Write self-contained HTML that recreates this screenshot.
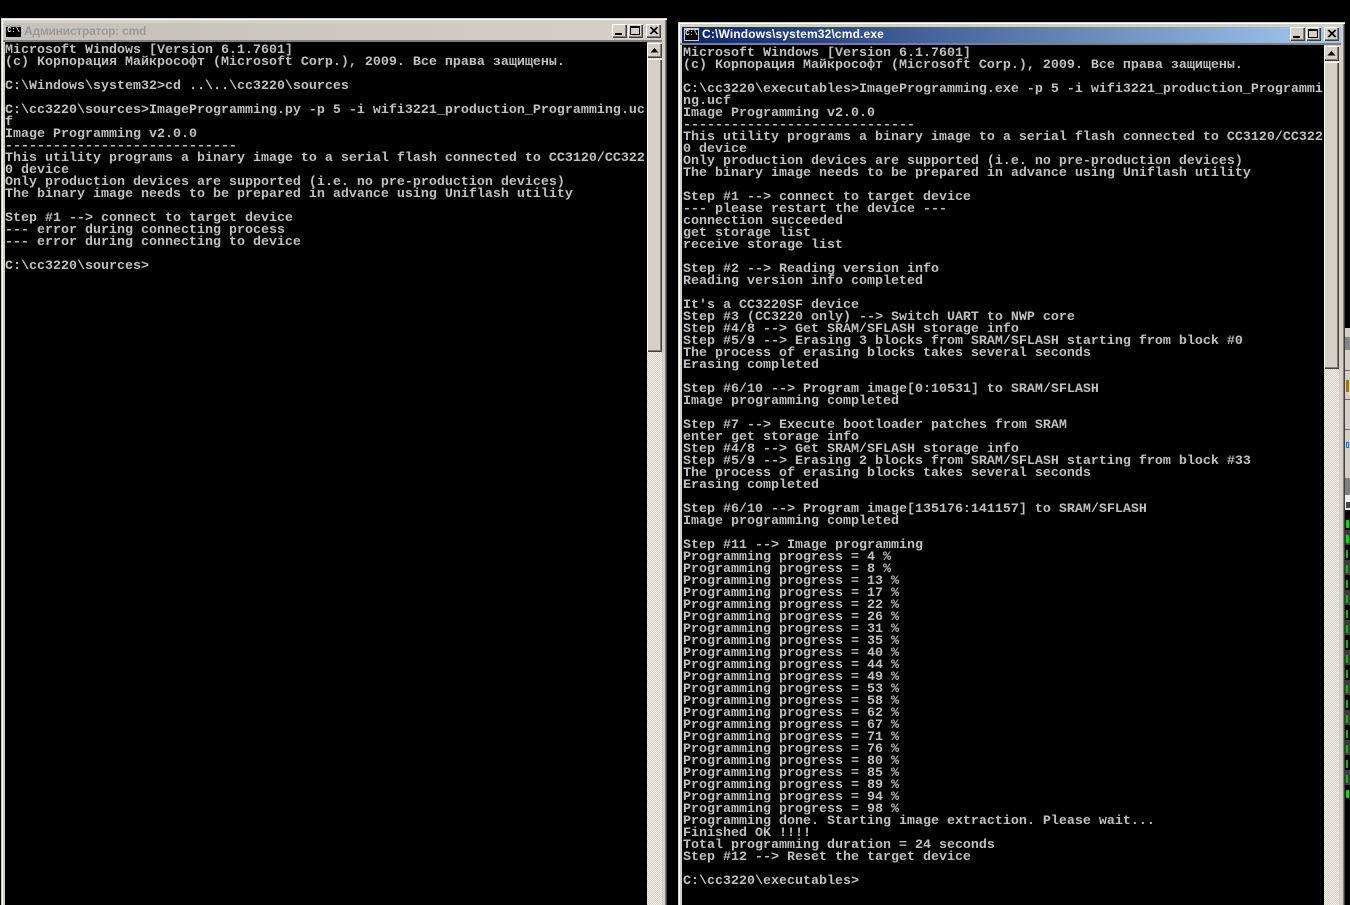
<!DOCTYPE html>
<html><head><meta charset="utf-8">
<style>
html,body{margin:0;padding:0;background:#000;width:1350px;height:905px;overflow:hidden}
div,pre,svg{position:absolute}
pre{margin:0;font-family:"Liberation Mono","DejaVu Sans Mono",monospace;font-size:13.33px;line-height:12px;color:#c0c0c0;font-weight:bold;letter-spacing:0;-webkit-font-smoothing:none}
.win{background:#d4d0c8;box-shadow:inset 1px 1px 0 #d4d0c8,inset 2px 2px 0 #fff,inset -1px 0 0 #404040,inset -2px 0 0 #808080}
.client{background:#000}
.title{font-family:"Liberation Sans",sans-serif;font-weight:bold;font-size:12px;line-height:16px;white-space:nowrap}
.btn{background:#d4d0c8;box-shadow:inset 1px 1px 0 #fff,inset -1px -1px 0 #404040,inset -2px -2px 0 #808080}
.track{background-color:#f2f0ea;background-image:linear-gradient(45deg,#d4d0c8 25%,transparent 25%,transparent 75%,#d4d0c8 75%),linear-gradient(45deg,#d4d0c8 25%,transparent 25%,transparent 75%,#d4d0c8 75%);background-size:2px 2px;background-position:0 0,1px 1px}
</style></head><body>

<!-- LEFT WINDOW -->
<div class="win" style="left:1px;top:18px;width:666px;height:887px"></div>
<div style="left:4px;top:23px;width:660px;height:17px;background:linear-gradient(90deg,#c4c1b9,#d4d0c8)"></div>
<div style="left:6px;top:25px;width:15px;height:12px;background:#000;border-top:2px solid #a8a8a8;box-sizing:border-box;color:#fff;font:bold 7px/9px 'Liberation Mono',monospace;text-align:center;overflow:hidden">C:\</div>
<div class="title" style="left:24px;top:23px;color:#9a9a9a;letter-spacing:-.22px">Администратор: cmd</div>
<div class="btn" style="left:612px;top:24px;width:15px;height:14px"></div>
<div style="left:615px;top:33px;width:7px;height:2px;background:#000"></div>
<div class="btn" style="left:628px;top:24px;width:15px;height:14px"></div>
<div style="left:630px;top:26px;width:10px;height:9px;border:1px solid #000;border-top-width:2px;box-sizing:border-box"></div>
<div class="btn" style="left:646px;top:24px;width:15px;height:14px"></div>
<svg style="left:646px;top:24px" width="15" height="14"><path d="M4 3L11 10M5 3L12 10M11 3L4 10M12 3L5 10" stroke="#000" stroke-width="1"/></svg>
<div style="left:3px;top:40px;width:659px;height:2px;background:#808080"></div>
<div class="client" style="left:5px;top:42px;width:642px;height:863px"></div>
<div class="track" style="left:647px;top:43px;width:15px;height:862px"></div>
<div class="btn" style="left:647px;top:43px;width:15px;height:15px"></div>
<svg style="left:647px;top:43px" width="15" height="15"><path d="M7.5 5L11.5 9.500H3.500Z" fill="#000"/></svg>
<div class="btn" style="left:647px;top:59px;width:15px;height:293px"></div>
<pre style="left:5px;top:45px">Microsoft Windows [Version 6.1.7601]
(c) Корпорация Майкрософт (Microsoft Corp.), 2009. Все права защищены.

C:\Windows\system32&gt;cd ..\..\cc3220\sources

C:\cc3220\sources&gt;ImageProgramming.py -p 5 -i wifi3221_production_Programming.uc
f
Image Programming v2.0.0
-----------------------------
This utility programs a binary image to a serial flash connected to CC3120/CC322
0 device
Only production devices are supported (i.e. no pre-production devices)
The binary image needs to be prepared in advance using Uniflash utility

Step #1 --&gt; connect to target device
--- error during connecting process
--- error during connecting to device

C:\cc3220\sources&gt;</pre>

<!-- RIGHT EDGE STRIP -->
<div style="left:1345px;top:328px;width:5px;height:182px;background:#d4d0c8"></div>
<div style="left:1345px;top:337px;width:5px;height:13px;background:#858585"></div>
<div style="left:1345px;top:370px;width:5px;height:1px;background:#666"></div>
<div style="left:1346px;top:380px;width:3px;height:12px;background:#9a7a10"></div>
<div style="left:1345px;top:399px;width:5px;height:1px;background:#666"></div>
<div style="left:1345px;top:429px;width:5px;height:1px;background:#666"></div>
<div style="left:1346px;top:442px;width:3px;height:6px;border:1px solid #2a6fc0;box-sizing:border-box"></div>
<div style="left:1345px;top:478px;width:5px;height:17px;background:#808080"></div>
<div style="left:1345px;top:495px;width:5px;height:15px;background:#f0f0f0"></div>
<div style="left:1346px;top:502px;width:4px;height:6px;background:#444"></div>
<div style="left:1345px;top:510px;width:5px;height:395px;background:#000"></div>
<div style="left:1345px;top:530px;width:5px;height:255px;background:repeating-linear-gradient(180deg,#3c3c3c 0,#3c3c3c 15px,#000 15px,#000 30px)"></div>
<div style="left:1346px;top:515px;width:2px;height:285px;background:repeating-linear-gradient(180deg,transparent 0,transparent 5px,#00c000 5px,#00c000 13px,transparent 13px,transparent 15px)"></div>
<div style="left:1346px;top:520px;width:3px;height:8px;background:#00e000"></div>
<div style="left:1346px;top:535px;width:3px;height:8px;background:#00e000"></div>
<div style="left:1346px;top:790px;width:3px;height:8px;background:#00e000"></div>

<!-- RIGHT WINDOW -->
<div class="win" style="left:678px;top:22px;width:667px;height:883px"></div>
<div style="left:682px;top:27px;width:659px;height:16px;background:linear-gradient(90deg,#0a246a,#a6caf0)"></div>
<div style="left:684px;top:28px;width:15px;height:13px;background:#000;border:1px solid #ccc;border-top-width:2px;box-sizing:border-box;color:#fff;font:bold 7px/9px 'Liberation Mono',monospace;text-align:center;overflow:hidden">C:\</div>
<div class="title" style="left:702px;top:26px;color:#fff;letter-spacing:.15px">C:\Windows\system32\cmd.exe</div>
<div class="btn" style="left:1290px;top:27px;width:15px;height:14px"></div>
<div style="left:1293px;top:36px;width:7px;height:2px;background:#000"></div>
<div class="btn" style="left:1306px;top:27px;width:15px;height:14px"></div>
<div style="left:1308px;top:29px;width:10px;height:9px;border:1px solid #000;border-top-width:2px;box-sizing:border-box"></div>
<div class="btn" style="left:1324px;top:27px;width:15px;height:14px"></div>
<svg style="left:1324px;top:27px" width="15" height="14"><path d="M4 3L11 10M5 3L12 10M11 3L4 10M12 3L5 10" stroke="#000" stroke-width="1"/></svg>
<div style="left:680px;top:43px;width:661px;height:2px;background:#808080"></div>
<div class="client" style="left:682px;top:45px;width:642px;height:860px"></div>
<div class="track" style="left:1324px;top:46px;width:15px;height:859px"></div>
<div class="btn" style="left:1324px;top:46px;width:15px;height:15px"></div>
<svg style="left:1324px;top:46px" width="15" height="15"><path d="M7.5 5L11.5 9.500H3.500Z" fill="#000"/></svg>
<div class="btn" style="left:1324px;top:62px;width:15px;height:307px"></div>
<pre style="left:683px;top:48px">Microsoft Windows [Version 6.1.7601]
(c) Корпорация Майкрософт (Microsoft Corp.), 2009. Все права защищены.

C:\cc3220\executables&gt;ImageProgramming.exe -p 5 -i wifi3221_production_Programmi
ng.ucf
Image Programming v2.0.0
-----------------------------
This utility programs a binary image to a serial flash connected to CC3120/CC322
0 device
Only production devices are supported (i.e. no pre-production devices)
The binary image needs to be prepared in advance using Uniflash utility

Step #1 --&gt; connect to target device
--- please restart the device ---
connection succeeded
get storage list
receive storage list

Step #2 --&gt; Reading version info
Reading version info completed

It's a CC3220SF device
Step #3 (CC3220 only) --&gt; Switch UART to NWP core
Step #4/8 --&gt; Get SRAM/SFLASH storage info
Step #5/9 --&gt; Erasing 3 blocks from SRAM/SFLASH starting from block #0
The process of erasing blocks takes several seconds
Erasing completed

Step #6/10 --&gt; Program image[0:10531] to SRAM/SFLASH
Image programming completed

Step #7 --&gt; Execute bootloader patches from SRAM
enter get storage info
Step #4/8 --&gt; Get SRAM/SFLASH storage info
Step #5/9 --&gt; Erasing 2 blocks from SRAM/SFLASH starting from block #33
The process of erasing blocks takes several seconds
Erasing completed

Step #6/10 --&gt; Program image[135176:141157] to SRAM/SFLASH
Image programming completed

Step #11 --&gt; Image programming
Programming progress = 4 %
Programming progress = 8 %
Programming progress = 13 %
Programming progress = 17 %
Programming progress = 22 %
Programming progress = 26 %
Programming progress = 31 %
Programming progress = 35 %
Programming progress = 40 %
Programming progress = 44 %
Programming progress = 49 %
Programming progress = 53 %
Programming progress = 58 %
Programming progress = 62 %
Programming progress = 67 %
Programming progress = 71 %
Programming progress = 76 %
Programming progress = 80 %
Programming progress = 85 %
Programming progress = 89 %
Programming progress = 94 %
Programming progress = 98 %
Programming done. Starting image extraction. Please wait...
Finished OK !!!!
Total programming duration = 24 seconds
Step #12 --&gt; Reset the target device

C:\cc3220\executables&gt;</pre>
</body></html>
